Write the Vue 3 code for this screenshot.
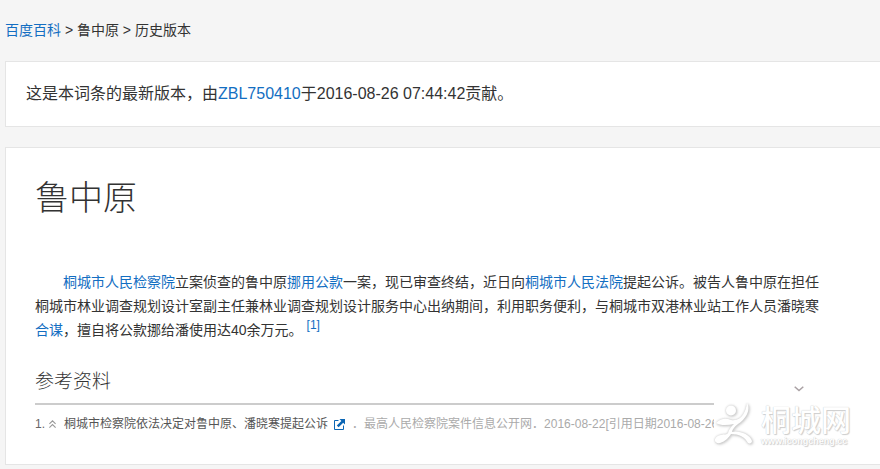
<template>
  <div class="page">
    <nav class="crumbs" aria-label="breadcrumb">
      <a href="#">百度百科</a> &gt; <span>鲁中原</span> &gt; <span>历史版本</span>
    </nav>

    <section class="card notice">
      这是本词条的最新版本，由<a href="#">{{ version.author }}</a>于{{ version.time }}贡献。
    </section>

    <article class="card entry">
      <h1 class="entry-title">鲁中原</h1>
      <p class="para">
        <template v-for="(part, i) in parts" :key="i"><a v-if="part.link" href="#">{{ part.text }}</a><span v-else>{{ part.text }}</span></template>
        <sup><a href="#ref-1">[1]</a></sup>
      </p>

      <div class="refs">
        <div class="refs-head">
          <h2>参考资料</h2>
          <button type="button" class="toggle" :aria-expanded="open" aria-label="展开或收起" @click="open = !open">
            <svg width="10" height="6" viewBox="0 0 10 6" fill="none" stroke="#aaa1a4" stroke-width="1.5">
              <path d="M.7 .7 5 4.6 9.3 .7" />
            </svg>
          </button>
        </div>
        <ol v-show="open" class="ref-list">
          <li v-for="r in refs" :id="'ref-' + r.no" :key="r.no">
            <span class="no">{{ r.no }}.</span>
            <a class="up" href="#" aria-label="返回正文">
              <svg width="7" height="8" viewBox="0 0 7 8" fill="none" stroke="#999" stroke-width="1.1">
                <path d="M.4 3.8 3.5 .8 6.6 3.8M.4 7.6 3.5 4.6 6.6 7.6" />
              </svg>
            </a>
            <a class="ref-title" href="#">{{ r.title }}</a>
            <a class="out" href="#" aria-label="打开链接">
              <svg width="11" height="11" viewBox="0 0 11 11">
                <path d="M4.5 1.5H.5v9h9V6.5" fill="none" stroke="#0b66b5" stroke-width="1" />
                <path d="M5.5 0H11v5.5L9.2 3.7 4.6 8.3 2.8 6.5 7.4 1.9z" fill="#0b66b5" />
              </svg>
            </a>
            <span class="source">．{{ r.site }}．</span>
            <span class="date">{{ r.date }}[引用日期{{ r.cited }}]</span>
          </li>
        </ol>
      </div>

      <div class="watermark">
        <svg class="mark" width="42" height="44" viewBox="0 0 42 44">
          <circle cx="17" cy="8.5" r="5" />
          <path d="M33 1C37 8 32 17 24 22C20 25 18 28 18 30C24 28 36 32 38 39C38 41 36 42 34 41C31 35 25 32 17 32C14 37 8 42 3 41C-1 39 1 34 7 33C10 32 13 33 14 31C15 27 17 25 20 22C14 23 7 24 2 21C7 16 12 16 17 18C27 20 32 10 33 1Z" />
        </svg>
        <div class="brand">
          <span class="brand-name">桐城网</span>
          <span class="brand-url">www.icongcheng.cc</span>
        </div>
      </div>
    </article>
  </div>
</template>

<script setup>
import { ref } from 'vue'

const open = ref(true)

const version = { author: 'ZBL750410', time: '2016-08-26 07:44:42' }

const parts = [
  { text: '桐城市人民检察院', link: true },
  { text: '立案侦查的鲁中原' },
  { text: '挪用公款', link: true },
  { text: '一案，现已审查终结，近日向' },
  { text: '桐城市人民法院', link: true },
  { text: '提起公诉。' },
  { text: '被告人鲁中原在担任' },
  { text: '桐城市林业调查规划设计室副主任兼林业调查规划设计服务中心出纳期间，' },
  { text: '利用职务便利，与桐城市双港林业站工作人员潘晓寒' },
  { text: '合谋', link: true },
  { text: '，擅自将公款挪给潘使用达40余万元。' }
]

const refs = [
  {
    no: 1,
    title: '桐城市检察院依法决定对鲁中原、潘晓寒提起公诉',
    site: '最高人民检察院案件信息公开网',
    date: '2016-08-22',
    cited: '2016-08-26'
  }
]
</script>

<style>
body {
  background: #f5f5f5;
}
</style>

<style scoped>
.page {
  padding: 18px 0 4px 5px;
  overflow: hidden;
  color: #333;
  font-family: "Liberation Sans", "Noto Sans CJK SC", sans-serif;
  font-size: 14px;
  line-height: 24px;
  text-spacing-trim: space-all;
}
a {
  color: #136ec2;
  text-decoration: none;
}
.card {
  background: #fff;
  border: 1px solid #e5e5e5;
  border-right: none;
}
.notice {
  margin-top: 19px;
  padding: 20px;
  font-size: 16px;
}
.entry {
  position: relative;
  margin-top: 20px;
  padding: 30px 56px 28px 29px;
}
.entry-title {
  margin: 0;
  font-size: 34px;
  font-weight: 300;
  line-height: 40px;
}
.para {
  margin: 52px 0 0;
  text-indent: 28px;
}
sup {
  margin-left: 4px;
  font-size: 12px;
  line-height: 0;
}

.refs-head {
  display: flex;
  align-items: flex-end;
  justify-content: space-between;
  margin-top: 26px;
  padding: 0 20px 7px 0;
  border-bottom: 2px solid #ccc;
}
h2 {
  margin: 0;
  font-size: 19px;
  font-weight: 300;
  line-height: 28px;
}
.toggle {
  display: flex;
  padding: 4px 0;
  border: none;
  background: none;
  cursor: pointer;
}
.ref-list {
  margin: 7px 0 0;
  padding: 0;
  list-style: none;
  font-size: 12px;
}
.ref-list li {
  display: flex;
  align-items: center;
  white-space: nowrap;
}
.no {
  width: 14px;
  color: #666;
}
.up {
  display: flex;
  width: 15px;
}
.ref-title {
  color: #555;
}
.out {
  display: flex;
  margin: 0 7px 0 6px;
}
.source,
.date {
  color: #aaa;
}

/* site stamp lying over the end of the reference list */
.watermark {
  position: absolute;
  right: 20px;
  bottom: 18px;
  display: flex;
  align-items: flex-end;
  gap: 5px;
  width: 146px;
  background: #fff;
}
.mark {
  flex: none;
  fill: #fff;
  filter: drop-shadow(0 0 1px #ccc) drop-shadow(1px 1px 1px #ccc);
}
.brand {
  display: flex;
  flex-direction: column;
  color: #fff;
  font-weight: bold;
  text-shadow: 1px 1px 1px #ccc, 0 0 1px #bbb;
  white-space: nowrap;
}
.brand-name {
  font-size: 30px;
  font-weight: 500;
  line-height: 30px;
}
.brand-url {
  font-size: 9px;
  line-height: 10px;
}
</style>
